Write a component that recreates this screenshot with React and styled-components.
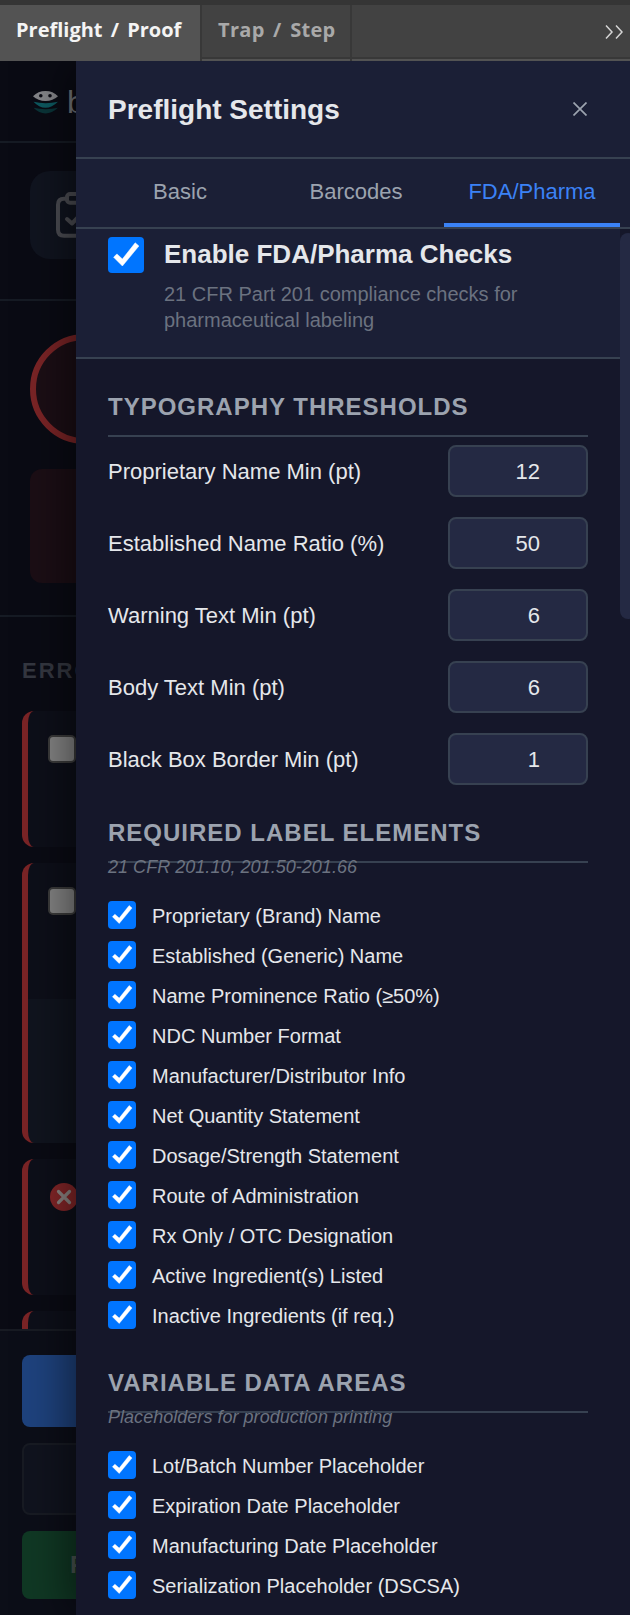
import React, { useState } from 'react';
import styled, { createGlobalStyle } from 'styled-components';

const GlobalStyle = createGlobalStyle`
    * {
        box-sizing: border-box;
    }
    body {
        margin: 0;
        background: #0a0b14;
        font-family: "Liberation Sans", Arial, sans-serif;
        overflow: hidden;
    }
`;

const thresholds = [
    { label: 'Proprietary Name Min (pt)', value: 12 },
    { label: 'Established Name Ratio (%)', value: 50 },
    { label: 'Warning Text Min (pt)', value: 6 },
    { label: 'Body Text Min (pt)', value: 6 },
    { label: 'Black Box Border Min (pt)', value: 1 },
];

const labelElements = [
    'Proprietary (Brand) Name',
    'Established (Generic) Name',
    'Name Prominence Ratio (≥50%)',
    'NDC Number Format',
    'Manufacturer/Distributor Info',
    'Net Quantity Statement',
    'Dosage/Strength Statement',
    'Route of Administration',
    'Rx Only / OTC Designation',
    'Active Ingredient(s) Listed',
    'Inactive Ingredients (if req.)',
];

const variableData = [
    'Lot/Batch Number Placeholder',
    'Expiration Date Placeholder',
    'Manufacturing Date Placeholder',
    'Serialization Placeholder (DSCSA)',
];

const tabs = ['Basic', 'Barcodes', 'FDA/Pharma'];

function Checkbox({ size = 28, checked, onChange }) {
    return (
        <CheckBoxStyled type="button" role="checkbox" aria-checked={checked} $size={size} $checked={checked} onClick={onChange}>
            {checked && (
                <svg viewBox="0 0 36 36" width={size} height={size}>
                    <polygon
                        points="5.6,20.2 8.9,16.9 14.4,22 27.2,5.8 30.9,9 14.4,29"
                        fill="#fff"
                        stroke="#fff"
                        strokeWidth="0.5"
                    />
                </svg>
            )}
        </CheckBoxStyled>
    );
}

function CheckList({ items }) {
    const [off, setOff] = useState({});

    return (
        <CheckListStyled>
            {items.map(item => (
                <li key={item}>
                    <Checkbox checked={!off[item]} onChange={() => setOff({ ...off, [item]: !off[item] })} />
                    <span>{item}</span>
                </li>
            ))}
        </CheckListStyled>
    );
}

function Background() {
    return (
        <BackgroundStyled>
            <BrandBar>
                <svg width="26" height="24" viewBox="0 0 26 24">
                    <path d="M0 5.2Q5 0 12.500 0Q20 0 25 5.200Q20 10 12.500 10Q5 10 0 5.200Z" fill="#85868a" />
                    <circle cx="7.8" cy="4.800" r="1.800" fill="#0a0b14" />
                    <circle cx="17" cy="4.800" r="1.800" fill="#0a0b14" />
                    <path d="M0.500 10.800Q12.500 13.500 25 10.800Q19 16.800 12.500 16.800Q6 16.800 0.500 10.800Z" fill="#0d5960" />
                    <path d="M0.500 16.800Q12.500 19.500 25 16.800Q19 22.500 12.500 22.500Q6 22.500 0.500 16.800Z" fill="#0a3438" />
                </svg>
                <span>b</span>
            </BrandBar>
            <ActionArea>
                <ActionCard>
                    <svg width="40" height="50" viewBox="0 0 40 50" fill="none" stroke="#4c4d53" strokeWidth="4" strokeLinecap="round" strokeLinejoin="round">
                        <path d="M10 7.7H8Q2 7.7 2 13.7V38.7Q2 44.7 8 44.7H34" />
                        <rect x="11" y="3" width="20" height="8.7" rx="3" />
                        <path d="M11 28L16 32.500L27 21" />
                    </svg>
                </ActionCard>
            </ActionArea>
            <ScoreArea>
                <ScoreRing />
                <AlertBox />
            </ScoreArea>
            <IssueArea>
                <h3>ERRORS</h3>
                <Issue $height={136}>
                    <EmptyBox />
                </Issue>
                <Issue $height={280} $details>
                    <EmptyBox />
                </Issue>
                <Issue $height={136}>
                    <ErrorIcon width="28" height="28" viewBox="0 0 28 28">
                        <circle cx="14" cy="14" r="14" fill="#842628" />
                        <path d="M8.500 8.500L19.500 19.500M19.500 8.500L8.500 19.500" stroke="#8c8583" strokeWidth="3.200" strokeLinecap="round" />
                    </ErrorIcon>
                </Issue>
                <Issue $height={136} />
            </IssueArea>
            <Footer>
                <FooterButton $color="#1e427d" $height={72} />
                <FooterButton $color="#10131e" $height={72} $outlined />
                <FooterButton $color="#103824" $height={68}>F</FooterButton>
            </Footer>
        </BackgroundStyled>
    );
}

function App() {
    const [active, setActive] = useState('FDA/Pharma');
    const [enabled, setEnabled] = useState(true);

    return (
        <AppStyled>
            <GlobalStyle />
            <HostTabs>
                <HostTab $active>Preflight / Proof</HostTab>
                <HostTab>Trap / Step</HostTab>
                <HostFill>
                    <svg width="18" height="14" viewBox="0 0 18 14" fill="none" stroke="#d4d4d4" strokeWidth="1.5">
                        <path d="M1 0.500L7 7L1 13.500M11 0.500L17 7L11 13.500" />
                    </svg>
                </HostFill>
            </HostTabs>
            <Stage>
                <Background />
                <Panel>
                    <PanelHeader>
                        <h2>Preflight Settings</h2>
                        <svg width="14" height="14" viewBox="0 0 14 14" stroke="#9ca3af" strokeWidth="1.700">
                            <path d="M0.500 0.500L13.500 13.500M13.500 0.500L0.500 13.500" />
                        </svg>
                    </PanelHeader>
                    <TabBar>
                        {tabs.map(tab => (
                            <Tab key={tab} $active={tab === active} onClick={() => setActive(tab)}>
                                {tab}
                            </Tab>
                        ))}
                    </TabBar>
                    <PanelBody>
                        <Content>
                            <EnableBox>
                                <Checkbox size={36} checked={enabled} onChange={() => setEnabled(!enabled)} />
                                <div>
                                    <h3>Enable FDA/Pharma Checks</h3>
                                    <p>21 CFR Part 201 compliance checks for pharmaceutical labeling</p>
                                </div>
                            </EnableBox>
                            <Section $top={34}>
                                <SectionTitle>Typography Thresholds</SectionTitle>
                                <Fields>
                                    {thresholds.map(({ label, value }) => (
                                        <Field key={label}>
                                            <span>{label}</span>
                                            <input type="text" defaultValue={value} />
                                        </Field>
                                    ))}
                                </Fields>
                            </Section>
                            <Section $top={34}>
                                <SectionTitle>Required Label Elements</SectionTitle>
                                <Note>21 CFR 201.10, 201.50-201.66</Note>
                                <CheckList items={labelElements} />
                            </Section>
                            <Section $top={40}>
                                <SectionTitle>Variable Data Areas</SectionTitle>
                                <Note>Placeholders for production printing</Note>
                                <CheckList items={variableData} />
                            </Section>
                        </Content>
                        <ScrollTrack>
                            <ScrollThumb />
                        </ScrollTrack>
                    </PanelBody>
                </Panel>
            </Stage>
        </AppStyled>
    );
}

const AppStyled = styled.div`
    width: 630px;
    height: 1615px;
    display: flex;
    flex-direction: column;
    overflow: hidden;
`;

const HostTabs = styled.div`
    display: flex;
    flex: none;
    height: 61px;
    border-top: 5px solid #353535;
    background: #424242;
    font-family: "Open Sans", sans-serif;
`;

const HostTab = styled.div`
    width: ${({ $active }) => ($active ? 202 : 150)}px;
    padding: 10px 0 0 16px;
    background: ${({ $active }) => ($active ? '#535353' : '#424242')};
    border-right: 2px solid #383838;
    box-shadow: ${({ $active }) => ($active ? 'none' : 'inset 0 -2px #535353, inset 0 -4px #383838')};
    color: ${({ $active }) => ($active ? '#f4f4f4' : '#a9a9a9')};
    font-size: 20px;
    font-weight: 700;
    line-height: 30px;
    letter-spacing: ${({ $active }) => ($active ? 0 : 0.3)}px;
    word-spacing: 3px;
    white-space: nowrap;
`;

const HostFill = styled.div`
    flex: 1;
    display: flex;
    justify-content: flex-end;
    padding: 20px 7px 0 0;
    box-shadow: inset 0 -2px #535353, inset 0 -4px #383838;
`;

const Stage = styled.div`
    position: relative;
    flex: 1;
    min-height: 0;
    overflow: hidden;
`;

const BackgroundStyled = styled.div`
    height: 100%;
    width: 100%;
    display: flex;
    flex-direction: column;
    background: #0a0b14;
`;

const BrandBar = styled.div`
    flex: none;
    display: flex;
    height: 82px;
    padding: 30px 0 0 33px;
    border-bottom: 2px solid #161b24;
    span {
        margin: -7px 0 0 8px;
        color: #77787c;
        font-size: 32px;
        line-height: 36px;
    }
`;

const ActionArea = styled.div`
    flex: none;
    height: 158px;
    padding: 28px 30px;
    border-bottom: 2px solid #161b24;
`;

const ActionCard = styled.div`
    height: 88px;
    padding: 20px 26px;
    border-radius: 20px;
    background: #10141f;
`;

const ScoreArea = styled.div`
    flex: none;
    height: 316px;
    padding: 33px 30px;
    border-bottom: 2px solid #161b24;
`;

const ScoreRing = styled.div`
    width: 110px;
    height: 110px;
    border: 6px solid #7a2426;
    border-radius: 50%;
    background: #1b0e15;
`;

const AlertBox = styled.div`
    height: 114px;
    margin-top: 25px;
    border-radius: 12px;
    background: #1b0e15;
`;

const IssueArea = styled.div`
    flex: 1;
    min-height: 0;
    padding: 41px 22px 0;
    overflow: hidden;
    h3 {
        margin: 0 0 27px;
        color: #343740;
        font-size: 22px;
        line-height: 26px;
        letter-spacing: 2px;
    }
`;

const Issue = styled.div`
    height: ${({ $height }) => $height}px;
    margin-bottom: 16px;
    padding: 24px 20px;
    border-left: 6px solid #7a2426;
    border-radius: 12px;
    background: ${({ $details }) => ($details ? 'linear-gradient(#0d0f19 136px, #10141e 136px)' : '#0d0f19')};
`;

const EmptyBox = styled.div`
    width: 28px;
    height: 28px;
    border: 2px solid #3b3b3b;
    border-radius: 5px;
    background: #848484;
`;

const ErrorIcon = styled.svg`
    display: block;
    margin-left: 2px;
`;

const Footer = styled.div`
    flex: none;
    height: 286px;
    display: flex;
    flex-direction: column;
    gap: 16px;
    padding: 24px 22px 0;
    border-top: 2px solid #181b23;
    background: #0c0e18;
`;

const FooterButton = styled.div`
    flex: none;
    height: ${({ $height }) => $height}px;
    padding: 20px 0 0 48px;
    border: ${({ $outlined }) => ($outlined ? '2px solid #181b23' : 'none')};
    border-radius: 8px;
    background: ${({ $color }) => $color};
    color: #4b5551;
    font-size: 24px;
    font-weight: 600;
    line-height: 28px;
`;

const Panel = styled.div`
    position: absolute;
    top: 0;
    left: 76px;
    width: 560px;
    height: 100%;
    display: flex;
    flex-direction: column;
    background: #15172a;
    box-shadow: -8px 0 40px rgba(0, 0, 0, 0.5);
`;

const PanelHeader = styled.div`
    flex: none;
    height: 98px;
    display: flex;
    align-items: center;
    justify-content: space-between;
    padding: 0 49px 0 32px;
    background: #1b1f36;
    border-bottom: 2px solid #374151;
    h2 {
        margin: 2px 0 0;
        color: #e5e7eb;
        font-size: 28px;
        line-height: 32px;
    }
`;

const TabBar = styled.div`
    flex: none;
    height: 70px;
    display: flex;
    padding: 0 16px;
    background: #1b1f36;
    border-bottom: 2px solid #374151;
`;

const Tab = styled.button`
    flex: 1;
    padding: 2px 0 0;
    border: none;
    border-bottom: 4px solid ${({ $active }) => ($active ? '#3b82f6' : 'transparent')};
    background: transparent;
    color: ${({ $active }) => ($active ? '#3b82f6' : '#9ca3af')};
    font-family: inherit;
    font-size: 22px;
    cursor: pointer;
`;

const PanelBody = styled.div`
    flex: 1;
    min-height: 0;
    display: flex;
    overflow: hidden;
`;

const Content = styled.div`
    width: 544px;
`;

const EnableBox = styled.div`
    height: 130px;
    display: flex;
    gap: 20px;
    padding: 8px 32px 0;
    background: #1b1f36;
    border-bottom: 2px solid #374151;
    h3 {
        margin: 2px 0 12px;
        color: #e5e7eb;
        font-size: 26px;
        line-height: 30px;
    }
    p {
        margin: 0;
        color: #6b7280;
        font-size: 20px;
        line-height: 26px;
    }
`;

const CheckBoxStyled = styled.button`
    flex: none;
    display: block;
    width: ${({ $size }) => $size}px;
    height: ${({ $size }) => $size}px;
    padding: 0;
    border: none;
    border-radius: 4px;
    background: ${({ $checked }) => ($checked ? '#0075ff' : '#fff')};
    svg {
        display: block;
    }
`;

const Section = styled.section`
    padding: ${({ $top }) => $top}px 32px 0;
`;

const SectionTitle = styled.h4`
    margin: 0;
    padding-bottom: 14px;
    border-bottom: 2px solid #374151;
    color: #9ca3af;
    font-size: 24px;
    line-height: 28px;
    letter-spacing: 1px;
    text-transform: uppercase;
`;

const Fields = styled.div`
    display: flex;
    flex-direction: column;
    gap: 20px;
    padding-top: 8px;
`;

const Field = styled.label`
    display: flex;
    align-items: center;
    justify-content: space-between;
    color: #e5e7eb;
    font-size: 22px;
    span {
        padding-top: 2px;
    }
    input {
        width: 140px;
        height: 52px;
        padding: 2px 46px 0 12px;
        border: 2px solid #374151;
        border-radius: 8px;
        background: #242943;
        color: #e5e7eb;
        font-family: inherit;
        font-size: 22px;
        text-align: right;
        outline: none;
    }
`;

const Note = styled.p`
    margin: -7px 0 23px;
    color: #6b7280;
    font-size: 18px;
    font-style: italic;
    line-height: 22px;
    letter-spacing: 0.03px;
`;

const CheckListStyled = styled.ul`
    display: flex;
    flex-direction: column;
    gap: 12px;
    margin: 0;
    padding: 0;
    list-style: none;
    li {
        display: flex;
        gap: 16px;
        height: 28px;
        color: #e5e7eb;
        font-size: 20px;
        line-height: 30px;
    }
`;

const ScrollTrack = styled.div`
    flex: 1;
    padding-top: 4px;
`;

const ScrollThumb = styled.div`
    height: 386px;
    border-radius: 8px;
    background: #242943;
`;

export default App;
